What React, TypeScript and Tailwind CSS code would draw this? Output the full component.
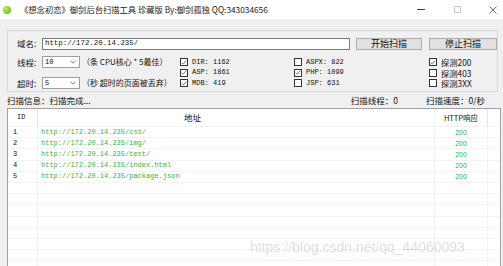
import React from "react";

const urls = ["css/", "img/", "test/", "index.html", "package.json"];

function Check({ on }: { on?: boolean }) {
  return (
    <span className="w-[8px] h-[8px] border border-[#333] bg-white flex items-center justify-center shrink-0">
      {on && (
        <svg width="7" height="7" viewBox="0 0 8 8">
          <path d="M1 4.2 L3 6.2 L7 1.5" fill="none" stroke="#333" strokeWidth="0.9" />
        </svg>
      )}
    </span>
  );
}

function CheckRow({ on, children }: { on?: boolean; children: React.ReactNode }) {
  return (
    <div className="flex items-center gap-[4px] h-[10.5px]">
      <Check on={on} />
      {children}
    </div>
  );
}

function Combo({ value }: { value: string }) {
  return (
    <div className="w-[38px] h-[12px] bg-white border border-[#9e9e9e] flex items-center justify-between pl-[2px] pr-[3px]">
      <span className="font-['Liberation_Mono',monospace] text-[7px] leading-none">{value}</span>
      <svg width="6" height="4" viewBox="0 0 6 4">
        <path d="M0.5 0.8 L3 3.2 L5.5 0.8" fill="none" stroke="#555" strokeWidth="0.8" />
      </svg>
    </div>
  );
}

export default function App() {
  const rows = Array.from({ length: 13 });
  return (
    <div className="w-[503px] h-[266px] bg-[#f0f0f0] overflow-hidden relative text-[#111] font-['Noto_Sans_CJK_SC',sans-serif] leading-none">
      {/* title bar */}
      <div className="h-[19px] bg-white flex items-center">
        <span className="ml-[3px] w-[8px] h-[8px] rounded-full bg-[radial-gradient(circle_at_35%_35%,#b9ec5a,#5fae14)]" />
        <span className="ml-[9px] text-[8.3px] text-[#222]">《想念初恋》御剑后台扫描工具 珍藏版 By:御剑孤独 QQ:343034656</span>
        <div className="ml-auto flex items-center h-full">
          <span className="w-[8px] h-[1px] bg-[#444] mr-[29px]" />
          <span className="w-[7px] h-[7px] border border-[#c8c8c8] mr-[28px]" />
          <svg width="8" height="8" viewBox="0 0 8 8" className="mr-[6px]">
            <path d="M0.5 0.5 L7.5 7.5 M7.5 0.5 L0.5 7.5" stroke="#444" strokeWidth="0.8" />
          </svg>
        </div>
      </div>

      {/* group box */}
      <div className="mt-[11px] ml-[7px] w-[491px] h-[62px] border border-[#d9d9d9] pl-[9px] pt-[6px]">
        <div className="flex items-center h-[13px]">
          <span className="w-[25px] text-[8.5px]">域名:</span>
          <div className="w-[308px] h-[12px] bg-white border border-[#7a7a7a] flex items-center pl-[2px]">
            <span className="font-['Liberation_Mono',monospace] text-[7.4px]">http://172.20.14.235/</span>
          </div>
          <button className="ml-[6px] w-[66px] h-[12px] bg-[#e1e1e1] border border-[#adadad] text-[9px] flex items-center justify-center">
            开始扫描
          </button>
          <button className="ml-[7px] w-[68px] h-[12px] bg-[#e1e1e1] border border-[#adadad] text-[9px] flex items-center justify-center">
            停止扫描
          </button>
        </div>

        <div className="flex mt-[6px]">
          <div className="w-[163px] flex flex-col gap-[9px]">
            <div className="flex items-center h-[12px]">
              <span className="w-[25px] text-[8.5px]">线程:</span>
              <Combo value="10" />
              <span className="ml-[2px] text-[8px] whitespace-nowrap">（条 CPU核心 * 5最佳）</span>
            </div>
            <div className="flex items-center h-[12px]">
              <span className="w-[25px] text-[8.5px]">超时:</span>
              <Combo value="5" />
              <span className="ml-[2px] text-[8px] whitespace-nowrap">（秒 超时的页面被丢弃）</span>
            </div>
          </div>
          <div className="w-[114px] flex flex-col pt-[1px] font-['Liberation_Mono',monospace] text-[7px]">
            <CheckRow on>DIR: 1162</CheckRow>
            <CheckRow on>ASP: 1861</CheckRow>
            <CheckRow on>MDB: 419</CheckRow>
          </div>
          <div className="w-[135px] flex flex-col pt-[1px] font-['Liberation_Mono',monospace] text-[7px]">
            <CheckRow>ASPX: 822</CheckRow>
            <CheckRow on>PHP: 1099</CheckRow>
            <CheckRow>JSP: 631</CheckRow>
          </div>
          <div className="flex flex-col pt-[1px] text-[8.3px]">
            <CheckRow on>探测200</CheckRow>
            <CheckRow>探测403</CheckRow>
            <CheckRow>探测3XX</CheckRow>
          </div>
        </div>
      </div>

      {/* status */}
      <div className="flex items-center h-[16px] text-[8.5px]">
        <span className="ml-[7px]">扫描信息：扫描完成...</span>
        <span className="ml-auto">扫描线程：0</span>
        <span className="ml-[28px] mr-[18px]">扫描速度：0/秒</span>
      </div>

      {/* list */}
      <div className="ml-[7px] w-[494px] h-[160px] bg-white border border-[#a0a0a0] overflow-hidden">
        <div className="flex h-[18px] items-center text-[8.5px] border-b border-[#f2f2f2]">
          <div className="w-[30px] h-full flex items-center pl-[9px] border-r border-[#e5e5e5] font-['Liberation_Mono',monospace] text-[7px]">ID</div>
          <div className="w-[397px] h-full flex items-center pl-[146px] border-r border-[#f5f5f5]">地址</div>
          <div className="w-[53px] h-full flex items-center justify-center border-r border-[#e5e5e5] text-[7.5px]">HTTP响应</div>
          <div className="flex-1 h-full" />
        </div>
        {rows.map((_, i) => (
          <div key={i} className="flex h-[11.2px] items-center border-b border-[#f2f2f2] font-['Liberation_Mono',monospace] text-[7px]">
            <div className="w-[30px] h-full flex items-center pl-[5px] border-r border-[#f2f2f2]">{i < 5 ? i + 1 : ""}</div>
            <div className="w-[397px] h-full flex items-center pl-[3px] border-r border-[#f2f2f2] text-[#3cb03c]">
              {i < 5 ? `http://172.20.14.235/${urls[i]}` : ""}
            </div>
            <div className="w-[53px] h-full flex items-center justify-center border-r border-[#f2f2f2] text-[#3cb03c] font-['Liberation_Sans',sans-serif]">
              {i < 5 ? "200" : ""}
            </div>
            <div className="flex-1 h-full" />
          </div>
        ))}
      </div>

      <span className="absolute left-[250px] top-[240px] text-[14px] text-[#000]/15 font-['Liberation_Sans',sans-serif]">
        https://blog.csdn.net/qq_44060093
      </span>
    </div>
  );
}
